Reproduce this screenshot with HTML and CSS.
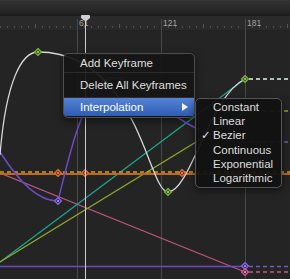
FILE: index.html
```html
<!DOCTYPE html>
<html>
<head>
<meta charset="utf-8">
<link rel="stylesheet" href="styles.css">
</head>
<body>
<div class="editor">
  <div class="header"></div>
  <div class="ruler">
    <span class="frame f61">61</span>
    <span class="frame f121">121</span>
    <span class="frame f181">181</span>
  </div>
  <div class="graph"></div>

  <svg class="canvas" width="290" height="279" viewBox="0 0 290 279">
    <defs>
      <pattern id="ticks" width="7" height="2" patternUnits="userSpaceOnUse">
        <rect x="0" y="0" width="1" height="2" fill="#4e4e4e"/>
      </pattern>
    </defs>
    <rect x="0" y="26" width="290" height="2" fill="url(#ticks)"/>
    <g class="midtick">
      <line x1="35.5" y1="24" x2="35.5" y2="28"/>
      <line x1="119.5" y1="24" x2="119.5" y2="28"/>
      <line x1="203.5" y1="24" x2="203.5" y2="28"/>
      <line x1="287.5" y1="24" x2="287.5" y2="28"/>
    </g>
    <g class="grid">
      <line x1="77.5" y1="19" x2="77.5" y2="279"/>
      <line x1="161.5" y1="19" x2="161.5" y2="279"/>
      <line x1="245.5" y1="19" x2="245.5" y2="279"/>
    </g>

    <!-- curves -->
    <line class="c-pink" x1="0" y1="173" x2="245" y2="272"/>
    <line class="c-purple" x1="0" y1="266.5" x2="245" y2="266.5"/>
    <line class="c-teal" x1="0" y1="262" x2="245" y2="79"/>
    <line class="c-lime" x1="0" y1="262" x2="245" y2="112"/>
    <line class="c-orange" x1="0" y1="174" x2="290" y2="174"/>
    <line class="c-yellow-dash" x1="0" y1="172" x2="290" y2="172"/>
    <path class="c-purple" d="M0,152 C20,183 38,201 58,201"/>
    <path class="c-purple" d="M58,201 C66,170 78,110 100,85 C120,62 150,100 180,119 C200,132 225,142 245,142"/>
    <path class="c-white" d="M0,155 C6,80 22,52 38,52 C138,52 148,192 168,192 C190,192 210,95 245,79"/>

    <!-- extrapolation dashes -->
    <line class="d-white" x1="249" y1="79" x2="290" y2="79"/>
    <line class="d-lime" x1="249" y1="111" x2="290" y2="111"/>
    <line class="d-purple" x1="249" y1="142" x2="290" y2="142"/>
    <line class="d-purple" x1="249" y1="266.5" x2="290" y2="266.5"/>
    <line class="d-pink" x1="249" y1="272" x2="290" y2="272"/>

    <!-- keyframes -->
    <g class="kf green" transform="translate(38,52)"><path d="M0,-3.5 L3.5,0 L0,3.5 L-3.5,0Z"/><circle r="1"/></g>
    <g class="kf green" transform="translate(245,79)"><path d="M0,-3.5 L3.5,0 L0,3.5 L-3.5,0Z"/><circle r="1"/></g>
    <g class="kf green" transform="translate(168,192)"><path d="M0,-3.5 L3.5,0 L0,3.5 L-3.5,0Z"/><circle r="1"/></g>
    <g class="kf orange" transform="translate(58,173)"><path d="M0,-3.5 L3.5,0 L0,3.5 L-3.5,0Z"/><circle r="1"/></g>
    <g class="kf orange" transform="translate(85,173)"><path d="M0,-3.5 L3.5,0 L0,3.5 L-3.5,0Z"/><circle r="1"/></g>
    <g class="kf orange" transform="translate(182,173)"><path d="M0,-3.5 L3.5,0 L0,3.5 L-3.5,0Z"/><circle r="1"/></g>
    <g class="kf purple" transform="translate(58,201)"><path d="M0,-3.5 L3.5,0 L0,3.5 L-3.5,0Z"/><circle r="1"/></g>
    <g class="kf purple" transform="translate(245,266)"><path d="M0,-3.5 L3.5,0 L0,3.5 L-3.5,0Z"/><circle r="1"/></g>
    <g class="kf pink" transform="translate(245,272)"><path d="M0,-3.5 L3.5,0 L0,3.5 L-3.5,0Z"/><circle r="1"/></g>

    <!-- playhead -->
    <line class="playhead" x1="85.5" y1="18" x2="85.5" y2="279"/>
    <path class="playhead-cap" d="M82,15 H89 A1,1 0 0 1 90,16 V18 L87,20.5 H84 L81,18 V16 A1,1 0 0 1 82,15 Z"/>
  </svg>

  <div class="menu">
    <div class="item first">Add Keyframe</div>
    <div class="sep"></div>
    <div class="item second">Delete All Keyframes</div>
    <div class="sep"></div>
    <div class="item third active"><span>Interpolation</span><span class="arrow"></span></div>
  </div>

  <div class="submenu">
    <div class="sub"><span class="check"></span>Constant</div>
    <div class="sub"><span class="check"></span>Linear</div>
    <div class="sub"><span class="check">✓</span>Bezier</div>
    <div class="sub"><span class="check"></span>Continuous</div>
    <div class="sub"><span class="check"></span>Exponential</div>
    <div class="sub"><span class="check"></span>Logarithmic</div>
  </div>
</div>
</body>
</html>
```

FILE: styles.css
```css
html, body {
  margin: 0;
  padding: 0;
  background: #242424;
  overflow: hidden;
}

.editor {
  position: relative;
  width: 290px;
  height: 279px;
  display: flex;
  flex-direction: column;
  font-family: "Liberation Sans", Arial, sans-serif;
}

.header {
  height: 16px;
  flex: none;
  background: linear-gradient(#3c3c3c 0, #303030 1px, #292929 9px, #202020 14px, #1a1a1a 16px);
}

.ruler {
  position: relative;
  height: 14px;
  flex: none;
  background: #2a2a2a;
  border-bottom: 1px solid #222;
}

.frame {
  position: absolute;
  top: 3px;
  font-size: 8.5px;
  line-height: 9px;
  color: #a4a4a4;
}
.f61 { left: 79px; }
.f121 { left: 163px; }
.f181 { left: 247px; }

.graph {
  flex: 1;
  background: #242424;
}

.canvas {
  position: absolute;
  left: 0;
  top: 0;
}

.midtick line { stroke: #555; stroke-width: 1; }
.grid line { stroke: #484848; stroke-width: 1; }

.c-pink { stroke: #b8567c; stroke-width: 1.3; fill: none; }
.c-purple { stroke: #6b4bc4; stroke-width: 1.5; fill: none; }
.c-teal { stroke: #1ea48e; stroke-width: 1.4; fill: none; }
.c-lime { stroke: #8aa82e; stroke-width: 1.4; fill: none; }
.c-orange { stroke: #c7631d; stroke-width: 2; }
.c-yellow-dash { stroke: #bfa51f; stroke-width: 1.6; stroke-dasharray: 4 3; }
.c-white { stroke: #d8d8d8; stroke-width: 1.3; fill: none; }

.d-white { stroke: #dff2ec; stroke-width: 1.5; stroke-dasharray: 4 3; }
.d-lime { stroke: #8aa82e; stroke-width: 1.4; stroke-dasharray: 4 3; }
.d-purple { stroke: #7456cc; stroke-width: 1.5; stroke-dasharray: 4 3; }
.d-pink { stroke: #c05a84; stroke-width: 1.4; stroke-dasharray: 4 3; }

.kf path { stroke-width: 1.2; }
.kf.green path { fill: #3d5c1f; stroke: #7cb542; }
.kf.green circle { fill: #a6d86a; }
.kf.orange path { fill: #6e3215; stroke: #e0703a; }
.kf.orange circle { fill: #f39a6a; }
.kf.purple path { fill: #3a2a70; stroke: #8a6ae0; }
.kf.purple circle { fill: #b9a0ff; }
.kf.pink path { fill: #6a2a48; stroke: #d0609a; }
.kf.pink circle { fill: #f0a0c8; }

.playhead { stroke: #cfcfcf; stroke-width: 1; }
.playhead-cap { fill: #cfcfcf; }

.menu {
  position: absolute;
  left: 63px;
  top: 53px;
  width: 130px;
  padding-bottom: 1px;
  border: 1px solid #4e4e4e;
  border-radius: 5px;
  background: rgba(22, 22, 22, 0.93);
  box-shadow: 0 3px 8px rgba(0, 0, 0, 0.5);
  overflow: hidden;
  font-size: 11.5px;
  color: #dedede;
}

.item {
  display: flex;
  align-items: center;
  justify-content: space-between;
  padding: 0 6px 0 16px;
  white-space: nowrap;
}
.item.first { height: 18px; }
.item.second { height: 24px; }
.item.third { height: 18px; }

.sep {
  height: 1px;
  background: #2c2c2c;
}

.item.active {
  background: linear-gradient(#5583d6, #2f5cb3);
  color: #fff;
}

.arrow {
  width: 0;
  height: 0;
  border-left: 6px solid #f2f2f2;
  border-top: 4px solid transparent;
  border-bottom: 4px solid transparent;
}

.submenu {
  position: absolute;
  left: 195px;
  top: 98px;
  width: 85px;
  padding: 1px 0 1.8px;
  border: 1px solid #555;
  border-radius: 5px;
  background: rgba(18, 18, 18, 0.95);
  box-shadow: 0 3px 8px rgba(0, 0, 0, 0.5);
  font-size: 11.5px;
  color: #dedede;
}

.sub {
  display: flex;
  align-items: center;
  height: 14.2px;
  padding-left: 5px;
  white-space: nowrap;
}

.check {
  width: 12px;
  flex: none;
  font-family: "DejaVu Sans", sans-serif;
  font-size: 11.5px;
}
```
